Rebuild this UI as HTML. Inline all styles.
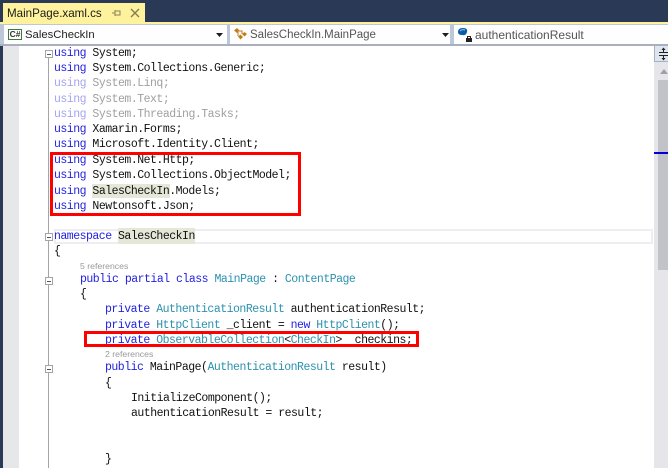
<!DOCTYPE html>
<html><head><meta charset="utf-8">
<style>
html,body{margin:0;padding:0;background:#fff}
#p{position:relative;width:668px;height:468px;overflow:hidden;background:#fff}
#p div,#p svg{position:absolute}
.c{left:0;margin-top:1px;white-space:pre;font:11.5px/15px "Liberation Mono",monospace;letter-spacing:-.5px;color:#111;height:15px}
.k{color:#2222e0}.t{color:#2b91af}.g{color:#777}.gk{color:#a4a4f0}.gg{color:#a0a0a0}
.n{font:12px/16px "Liberation Sans",sans-serif;white-space:pre}
.r{font:8.7px/10px "Liberation Sans",sans-serif;color:#999;white-space:pre}
.fold{width:6px;height:6px;border:1px solid #a5a5a5;background:#fff}
.fold:after{content:"";position:absolute;left:1px;top:3px;width:4px;height:1px;background:#555}
.rb{border:3px solid #f00;box-sizing:border-box}
</style></head><body><div id="p">
<div style="left:0;top:0;width:668px;height:22px;background:#2a3a56"></div>
<div style="left:3px;top:3px;width:142px;height:20px;background:#fff29d"></div>
<div class="n" style="left:7px;top:6px;font-size:11.6px;color:#1a1a1a">MainPage.xaml.cs</div>
<svg style="left:112px;top:8px" width="10" height="10" viewBox="0 0 10 10"><path d="M0 5H3M3 2V8M3 3H8V7H3M8 3V7" fill="none" stroke="#8a8258"/></svg>
<svg style="left:130px;top:8px" width="10" height="10" viewBox="0 0 10 10"><path d="M1 1L9 9M9 1L1 9" fill="none" stroke="#857d52" stroke-width="1.4"/></svg>
<div style="left:0;top:22px;width:668px;height:2px;background:#fff29d"></div>
<div style="left:0;top:24px;width:668px;height:22px;background:#bcc7d8"></div>
<div style="left:4px;top:25px;width:223px;height:19px;background:#fefefe"></div>
<div style="left:230px;top:25px;width:220px;height:19px;background:#fefefe"></div>
<div style="left:454px;top:25px;width:214px;height:19px;background:#fefefe"></div>
<div style="left:8px;top:29px;width:12px;height:9px;border:1px solid #3c7d3c;background:#fff;font:bold 8.500px/9px 'Liberation Sans',sans-serif;color:#333;text-align:center">C#</div>
<div class="n" style="left:25px;top:27px;font-size:11.3px;color:#222">SalesCheckIn</div>
<svg style="left:216px;top:33px" width="8" height="5"><path d="M0 0H7L3.5 4Z" fill="#1e1e1e"/></svg>
<svg style="left:233px;top:27px" width="16" height="14" viewBox="0 0 16 14"><path d="M1 3.5L4 1L6.500 3.500L4 6ZM9 7L11.500 5L14 7L11.500 9.500ZM5 9.500L7.500 7.500L10 10L7.500 12.500Z" fill="#c27d1a"/><path d="M5 4H9V7M5 5V9" fill="none" stroke="#c27d1a"/></svg>
<div class="n" style="left:250px;top:27px;font-size:11.5px;color:#555">SalesCheckIn.MainPage</div>
<svg style="left:442px;top:33px" width="8" height="5"><path d="M0 0H7L3.5 4Z" fill="#1e1e1e"/></svg>
<svg style="left:457px;top:27px" width="17" height="15" viewBox="0 0 17 15"><path d="M1 5Q1 1 6 1Q11 1 10 5Q9 9 5 8Q1 8 1 5Z" fill="#0a5ca8"/><path d="M3 4Q5 2 8 3" fill="none" stroke="#9cc4e8"/><path d="M9 11H15V15H9Z" fill="#222"/><path d="M10.500 11V9.500H13.500V11" fill="none" stroke="#222"/></svg>
<div class="n" style="left:475px;top:27px;color:#555">authenticationResult</div>
<div style="left:0;top:44px;width:668px;height:2px;background:#a8b0c0"></div>
<div style="left:0;top:46px;width:3px;height:422px;background:#2a3a56"></div>
<div style="left:3px;top:46px;width:16px;height:422px;background:#e6e7e8"></div>
<div style="left:654px;top:46px;width:14px;height:422px;background:#e6e6ea"></div>
<div style="left:654px;top:46px;width:14px;height:16px;background:#dfe5f0;border-left:1px solid #a8b0c0;border-bottom:1px solid #a8b0c0;box-sizing:border-box"></div>
<svg style="left:659px;top:47px" width="9" height="14" viewBox="0 0 9 14"><path d="M0 5.500H9M0 8.500H9M4.500 1V5M4.500 9V13" stroke="#222" fill="none"/><path d="M2.500 3L4.500 .5L6.500 3ZM2.500 11L4.500 13.500L6.500 11Z" fill="#222"/></svg>
<svg style="left:660px;top:68px" width="8" height="6"><path d="M0 6L4 1L8 6Z" fill="#a0a0a8"/></svg>
<div style="left:658px;top:80px;width:10px;height:190px;background:#c2c3c9"></div>
<div style="left:654px;top:152px;width:14px;height:2px;background:#0000d0"></div>
<div style="left:54px;top:229px;width:599px;height:15px;border:2px solid #eeeef2;box-sizing:border-box"></div>
<div style="left:92px;top:184px;width:78px;height:14px;background:#e5e8d8"></div>
<div style="left:118px;top:228px;width:77px;height:16px;background:#e5e8d8"></div>
<div style="left:48px;top:57px;width:1px;height:411px;background:#a5a5a5"></div>
<div class="fold" style="left:45px;top:50px"></div>
<div class="fold" style="left:45px;top:233px"></div>
<div class="fold" style="left:45px;top:277px"></div>
<div class="fold" style="left:45px;top:365px"></div>
<div class="c" style="top:45px;left:54px"><span class="k">using</span> System;</div>
<div class="c" style="top:60px;left:54px"><span class="k">using</span> System.Collections.Generic;</div>
<div class="c" style="top:75px;left:54px"><span class="gk">using</span> <span class="gg">System.Linq;</span></div>
<div class="c" style="top:91px;left:54px"><span class="gk">using</span> <span class="gg">System.Text;</span></div>
<div class="c" style="top:106px;left:54px"><span class="gk">using</span> <span class="gg">System.Threading.Tasks;</span></div>
<div class="c" style="top:121px;left:54px"><span class="k">using</span> Xamarin.Forms;</div>
<div class="c" style="top:136px;left:54px"><span class="k">using</span> Microsoft.Identity.Client;</div>
<div class="c" style="top:152px;left:54px"><span class="k">using</span> System.Net.Http;</div>
<div class="c" style="top:167px;left:54px"><span class="k">using</span> System.Collections.ObjectModel;</div>
<div class="c" style="top:183px;left:54px"><span class="k">using</span> SalesCheckIn.Models;</div>
<div class="c" style="top:198px;left:54px"><span class="k">using</span> Newtonsoft.Json;</div>
<div class="c" style="top:228px;left:54px"><span class="k">namespace</span> SalesCheckIn</div>
<div class="c" style="top:243px;left:54px">{</div>
<div class="r" style="left:80px;top:261px">5 references</div>
<div class="c" style="top:271px;left:80px"><span class="k">public</span> <span class="k">partial</span> <span class="k">class</span> <span class="t">MainPage</span> : <span class="t">ContentPage</span></div>
<div class="c" style="top:286px;left:80px">{</div>
<div class="c" style="top:301px;left:105px"><span class="k">private</span> <span class="t">AuthenticationResult</span> authenticationResult;</div>
<div class="c" style="top:317px;left:105px"><span class="k">private</span> <span class="t">HttpClient</span> _client = <span class="k">new</span> <span class="t">HttpClient</span>();</div>
<div class="c" style="top:332px;left:105px"><span class="k">private</span> <span class="t">ObservableCollection</span>&lt;<span class="t">CheckIn</span>&gt;  checkins;</div>
<div class="r" style="left:105px;top:349px">2 references</div>
<div class="c" style="top:359px;left:105px"><span class="k">public</span> MainPage(<span class="t">AuthenticationResult</span> result)</div>
<div class="c" style="top:375px;left:105px">{</div>
<div class="c" style="top:390px;left:131px">InitializeComponent();</div>
<div class="c" style="top:405px;left:131px">authenticationResult = result;</div>
<div class="c" style="top:451px;left:105px">}</div>
<div class="rb" style="left:50px;top:152px;width:251px;height:64px"></div>
<div class="rb" style="left:84px;top:331px;width:335px;height:16px"></div>
</div></body></html>
